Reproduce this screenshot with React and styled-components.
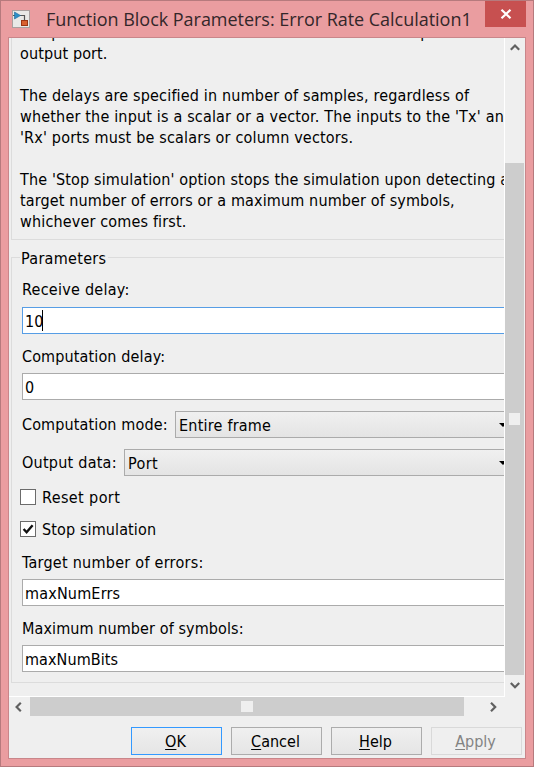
import React from 'react';
import styled, { createGlobalStyle } from 'styled-components';

const GlobalStyle = createGlobalStyle`
  * { box-sizing: border-box; }
  body { margin: 0; overflow: hidden; }
`;

const Window = styled.div`
  width: 534px;
  height: 767px;
  display: flex;
  flex-direction: column;
  padding: 0 7px 7px;
  border: 1px solid #b67a7d;
  background: #ea9da0;
  color: #000;
  font: 16px/21px "DejaVu Sans Condensed", "DejaVu Sans", sans-serif;
  font-stretch: condensed;
  white-space: pre;
`;

const TitleBar = styled.header`
  height: 36px;
  flex: none;
  display: flex;
  align-items: flex-start;
  padding-left: 4px;
`;

const AppIcon = styled.svg`
  width: 18px;
  height: 18px;
  margin-top: 9px;
`;

const Title = styled.h1`
  flex: 1;
  margin: 6px 0 0 16px;
  font: 400 18px/24px "Open Sans", "Noto Sans", sans-serif;
  letter-spacing: -0.03px;
  color: #33272a;
`;

const CloseButton = styled.button`
  width: 41px;
  height: 26px;
  flex: none;
  display: flex;
  align-items: center;
  justify-content: center;
  padding: 0;
  border: 0;
  background: #c75050;
`;

const Client = styled.main`
  flex: 1;
  min-height: 0;
  display: flex;
  flex-direction: column;
  border: 1px solid #c9868a;
  background: #efefef;
`;

const ScrollArea = styled.div`
  display: grid;
  grid-template-columns: 496px 19px;
  grid-template-rows: 659px 19px;
`;

const Viewport = styled.div`
  overflow: hidden;
  border-right: 1px solid #fff;
  border-bottom: 1px solid #fff;
`;

const Content = styled.div`
  width: 560px;
  margin: -16px 0 0 2px;
`;

const Description = styled.section`
  height: 218px;
  padding-left: 8px;
  border: 1px solid #dcdcdc;
  border-top: 0;
`;

const Text = styled.span`
  display: ${(p) => (p.$line ? 'block' : 'inline')};
  min-height: 21px;
  letter-spacing: ${(p) => p.$track || 0}px;
`;

const Group = styled.fieldset`
  height: 435px;
  margin: 8px 0 0;
  padding: 0 0 0 10px;
  border: 1px solid #dcdcdc;
  min-width: 0;
`;

const Legend = styled.legend`
  height: 19px;
  margin-left: -2px;
  padding: 0 2px 0 1px;
`;

const Label = styled.label`
  display: block;
  height: 21px;
  margin-top: ${(p) => p.$top}px;
`;

const Field = styled.div`
  height: 27px;
  display: flex;
  align-items: center;
  margin-top: ${(p) => p.$top}px;
  padding: 1px 0 0 2px;
  border: 1px solid ${(p) => (p.$focused ? '#569de5' : '#ababab')};
  background: #fff;
`;

const Caret = styled.i`
  width: 1px;
  height: 21px;
  margin: -1px 0 0 -1px;
  background: #000;
`;

const SelectRow = styled.div`
  height: 27px;
  display: flex;
  align-items: center;
  margin-top: 11px;
`;

const SelectName = styled.span`
  width: ${(p) => p.$width}px;
  flex: none;
`;

const Select = styled.div`
  width: ${(p) => p.$width}px;
  height: 27px;
  display: flex;
  align-items: center;
  justify-content: space-between;
  padding: 1px 2px 0 3px;
  border: 1px solid #ababab;
  background: linear-gradient(#f0f0f0, #e4e4e4);
`;

const CheckRow = styled.label`
  height: 16px;
  display: flex;
  align-items: center;
  gap: 6px;
  margin: ${(p) => p.$top}px 0 0 -2px;
`;

const CheckBox = styled.span`
  width: 16px;
  height: 16px;
  display: flex;
  border: 1px solid #6b6b6b;
  background: #fff;
`;

const ScrollBar = styled.div`
  display: flex;
  flex-direction: ${(p) => (p.$vertical ? 'column' : 'row')};
`;

const ArrowCell = styled.span`
  display: flex;
  align-items: center;
  justify-content: center;
  flex: 0 0 ${(p) => p.$size}px;
`;

const Track = styled.span`
  flex: 0 0 ${(p) => p.$size}px;
`;

const Thumb = styled.span`
  flex: 0 0 ${(p) => p.$size}px;
  display: flex;
  align-items: center;
  justify-content: center;
  background: #cdcdcd;
`;

const Grip = styled.span`
  width: ${(p) => p.$w}px;
  height: ${(p) => p.$h}px;
  background: #efefef;
`;

const Footer = styled.footer`
  display: flex;
  justify-content: flex-end;
  gap: 9px;
  padding: 11px 3px 0 0;
`;

const Button = styled.button`
  width: 91px;
  height: 28px;
  padding: 1px 2px 0 0;
  border: 1px solid ${(p) => (p.$primary ? '#3399ff' : '#acacac')};
  background: linear-gradient(#f0f0f0, #e5e5e5);
  color: #000;
  font: inherit;
  text-underline-offset: 2px;
  &:disabled {
    border-color: #d9d9d9;
    background: #efefef;
    color: #838383;
  }
`;

const description = [
  ['compared. This vector can be sent to either the workspace or an', 0.18],
  ['output port.', 0.12],
  ['', 0],
  ['The delays are specified in number of samples, regardless of', 0.17],
  ["whether the input is a scalar or a vector. The inputs to the 'Tx' and", 0.175],
  ["'Rx' ports must be scalars or column vectors.", 0.17],
  ['', 0],
  ["The 'Stop simulation' option stops the simulation upon detecting a", 0.145],
  ['target number of errors or a maximum number of symbols,', 0.135],
  ['whichever comes first.', 0.16],
];

const chevrons = {
  up: 'M0.8 6.7 5 2.5 9.2 6.7',
  down: 'M0.8 2 5 6.2 9.2 2',
  left: 'M6.8 0.8 2.6 5 6.8 9.2',
  right: 'M3 0.8 7.2 5 3 9.2',
};

function Chevron({ to }) {
  return (
    <svg width="10" height="10" viewBox="0 0 10 10">
      <path d={chevrons[to]} fill="none" stroke="#606060" strokeWidth="2.2" />
    </svg>
  );
}

function Dropdown({ name, nameWidth, track, width, value, valueTrack }) {
  return (
    <SelectRow>
      <SelectName $width={nameWidth}><Text $track={track}>{name}</Text></SelectName>
      <Select $width={width}>
        <Text $track={valueTrack}>{value}</Text>
        <svg width="8" height="4" viewBox="0 0 8 4"><path d="M0 0h8L4 4z" /></svg>
      </Select>
    </SelectRow>
  );
}

export default function App() {
  return (
    <Window>
      <GlobalStyle />
      <TitleBar>
        <AppIcon viewBox="0 0 18 18">
          <rect x="0.5" y="0.5" width="17" height="17" fill="#e9e9e7" stroke="#aaa09f" />
          <path d="M1 5.5h3M8 5.5h4.5v5" fill="none" stroke="#555" strokeWidth="1.2" />
          <path d="M2.5 2 8.5 5.5 2.5 9z" fill="#2b8fc7" stroke="#1c6798" strokeWidth="0.6" />
          <rect x="9.5" y="10.5" width="6" height="5" fill="#d9602f" stroke="#9b3413" />
        </AppIcon>
        <Title>Function Block Parameters: Error Rate Calculation1</Title>
        <CloseButton aria-label="Close">
          <svg width="12" height="10" viewBox="0 0 12 10">
            <path d="M1.5 0.8 10.5 9.2M10.5 0.8 1.5 9.2" stroke="#fff" strokeWidth="2.2" />
          </svg>
        </CloseButton>
      </TitleBar>
      <Client>
        <ScrollArea>
          <Viewport>
            <Content>
              <Description>
                {description.map(([line, track], i) => (
                  <Text key={i} $line $track={track}>{line}</Text>
                ))}
              </Description>
              <Group>
                <Legend><Text $track={0.3}>Parameters</Text></Legend>
                <Label $top={12}><Text $track={0.26}>Receive delay:</Text></Label>
                <Field $top={7} $focused><Text>10</Text><Caret /></Field>
                <Label $top={12}><Text $track={0.13}>Computation delay:</Text></Label>
                <Field $top={6}><Text>0</Text></Field>
                <Dropdown name="Computation mode:" nameWidth={153} track={0.13} width={335} value="Entire frame" valueTrack={0.22} />
                <Dropdown name="Output data:" nameWidth={102} track={0.24} width={386} value="Port" valueTrack={0.4} />
                <CheckRow $top={13}><CheckBox /><Text $track={0.4}>Reset port</Text></CheckRow>
                <CheckRow $top={16}>
                  <CheckBox>
                    <svg width="14" height="14" viewBox="0 0 14 14">
                      <path d="M2.6 7 5.6 10.2 11.6 3.2" fill="none" stroke="#111" strokeWidth="2.4" />
                    </svg>
                  </CheckBox>
                  <Text $track={0.12}>Stop simulation</Text>
                </CheckRow>
                <Label $top={15}><Text $track={0.27}>Target number of errors:</Text></Label>
                <Field $top={6}><Text $track={0.18}>maxNumErrs</Text></Field>
                <Label $top={12}><Text $track={0.1}>Maximum number of symbols:</Text></Label>
                <Field $top={6}><Text $track={0.08}>maxNumBits</Text></Field>
              </Group>
            </Content>
          </Viewport>
          <ScrollBar $vertical>
            <ArrowCell $size={19}><Chevron to="up" /></ArrowCell>
            <Track $size={106} />
            <Thumb $size={512}><Grip $w={11} $h={12} /></Thumb>
            <ArrowCell $size={21}><Chevron to="down" /></ArrowCell>
          </ScrollBar>
          <ScrollBar>
            <ArrowCell $size={20}><Chevron to="left" /></ArrowCell>
            <Track $size={1} />
            <Thumb $size={434}><Grip $w={12} $h={11} /></Thumb>
            <Track $size={20} />
            <ArrowCell $size={18}><Chevron to="right" /></ArrowCell>
          </ScrollBar>
        </ScrollArea>
        <Footer>
          <Button $primary><u>O</u>K</Button>
          <Button><u>C</u>ancel</Button>
          <Button><u>H</u>elp</Button>
          <Button disabled><u>A</u>pply</Button>
        </Footer>
      </Client>
    </Window>
  );
}
